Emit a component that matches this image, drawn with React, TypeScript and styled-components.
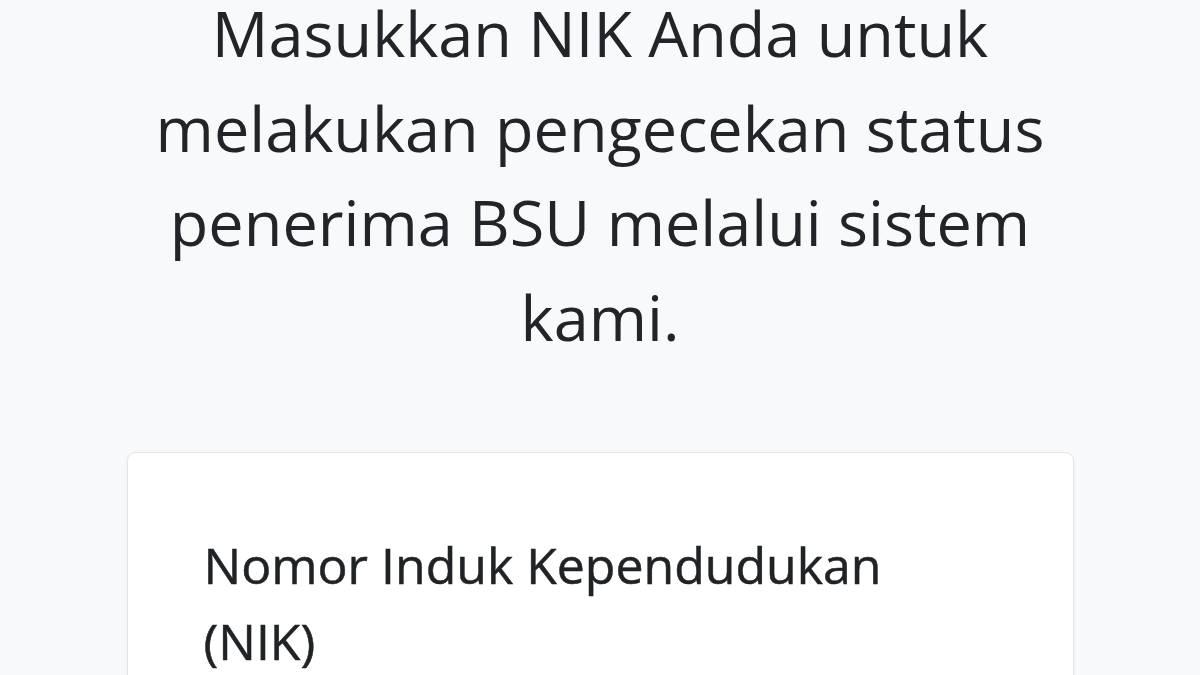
import React from 'react';
import styled, { createGlobalStyle } from 'styled-components';

const GlobalStyle = createGlobalStyle`
  html, body {
    margin: 0;
    padding: 0;
    background: #f8f9fa;
    overflow: hidden;
  }
  body {
    font-family: 'Open Sans', 'Noto Sans', sans-serif;
    color: #212529;
  }
`;

const Page = styled.main`
  width: 1200px;
  height: 675px;
  overflow: hidden;
  display: flex;
  flex-direction: column;
  align-items: center;
`;

const Intro = styled.h1`
  margin: -14px 0 0;
  width: 947px;
  font-size: 63px;
  font-weight: 400;
  line-height: 94.5px;
  text-align: center;
  color: #212529;
`;

const Card = styled.section`
  margin-top: 88px;
  width: 947px;
  box-sizing: border-box;
  background: #fff;
  border: 1px solid #e3e5e8;
  border-radius: 9px;
  box-shadow: 0 1px 4px rgba(0, 0, 0, 0.04);
  padding: 74px 76px;
  flex-shrink: 0;
`;

const Label = styled.label`
  display: block;
  font-size: 50px;
  font-weight: 500;
  line-height: 76px;
  color: #1f2326;
  -webkit-text-stroke: 0.5px #1f2326;
`;

export default function App() {
  return (
    <>
      <GlobalStyle />
      <Page>
        <Intro>
          Masukkan NIK Anda untuk melakukan pengecekan status penerima BSU
          melalui sistem kami.
        </Intro>
        <Card>
          <Label htmlFor="nik">Nomor Induk Kependudukan (NIK)</Label>
        </Card>
      </Page>
    </>
  );
}
